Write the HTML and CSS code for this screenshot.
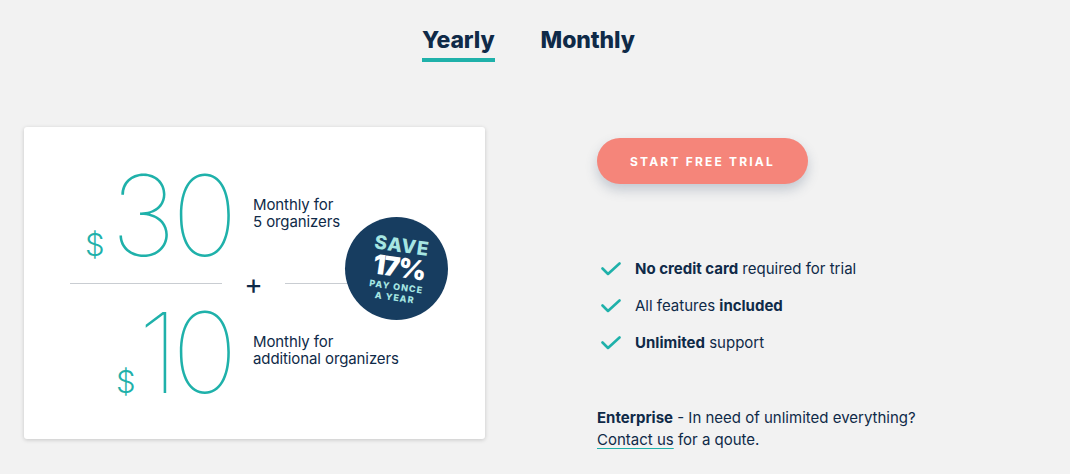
FILE: index.html
```html
<!DOCTYPE html>
<html lang="en">
<head>
<meta charset="utf-8">
<title>Pricing</title>
<link rel="stylesheet" href="styles.css">
</head>
<body>
<div class="page">
  <nav class="tabs">
    <a class="tab active">Yearly</a>
    <a class="tab">Monthly</a>
  </nav>
  <div class="content">
    <div class="card">
      <div class="price-row">
        <div class="price"><span class="cur">$</span><span class="num">30</span></div>
        <div class="desc">Monthly for<br>5 organizers</div>
      </div>
      <div class="divider">
        <span class="line short"></span>
        <span class="plus">+</span>
        <span class="line long"></span>
      </div>
      <div class="price-row">
        <div class="price"><span class="cur cur-ten">$</span><span class="num num-ten">10</span></div>
        <div class="desc">Monthly for<br>additional organizers</div>
      </div>
      <div class="badge">
        <div class="badge-inner">
          <span class="save">SAVE</span>
          <span class="pct">17%</span>
          <span class="once">PAY ONCE<br>A YEAR</span>
        </div>
      </div>
    </div>
    <div class="side">
      <button class="cta">START FREE TRIAL</button>
      <ul class="features">
        <li><svg class="check" viewBox="0 0 20 14" width="20" height="14"><path d="M1.5 6.5 L7 12 L18.5 1.5" fill="none" stroke="#1fb1aa" stroke-width="2.6" stroke-linecap="round" stroke-linejoin="round"/></svg><span><b>No credit card</b> required for trial</span></li>
        <li><svg class="check" viewBox="0 0 20 14" width="20" height="14"><path d="M1.5 6.5 L7 12 L18.5 1.5" fill="none" stroke="#1fb1aa" stroke-width="2.6" stroke-linecap="round" stroke-linejoin="round"/></svg><span>All features <b>included</b></span></li>
        <li><svg class="check" viewBox="0 0 20 14" width="20" height="14"><path d="M1.5 6.5 L7 12 L18.5 1.5" fill="none" stroke="#1fb1aa" stroke-width="2.6" stroke-linecap="round" stroke-linejoin="round"/></svg><span><b>Unlimited</b> support</span></li>
      </ul>
      <p class="enterprise"><b>Enterprise</b> - In need of unlimited everything?<br><a class="contact">Contact us</a> for a qoute.</p>
    </div>
  </div>
</div>
</body>
</html>
```
FILE: styles.css
```css
html, body {
  margin: 0;
  padding: 0;
}
body {
  background: #f2f2f2;
  font-family: Inter, "Noto Sans", sans-serif;
  color: #0f2a48;
  width: 1070px;
  height: 474px;
  overflow: hidden;
}
.page {
  display: flex;
  flex-direction: column;
}
.tabs {
  display: flex;
  justify-content: center;
  gap: 46px;
  padding-top: 25px;
  padding-right: 13px;
}
.tab {
  font-size: 23px;
  font-weight: 800;
  line-height: 30px;
  color: #0f2a48;
  padding-bottom: 3px;
  border-bottom: 4px solid transparent;
  letter-spacing: -0.1px;
}
.tab.active {
  border-bottom-color: #1fb1aa;
}
.content {
  display: flex;
  margin-top: 65px;
  padding-left: 24px;
  gap: 112px;
}
.card {
  position: relative;
  width: 461px;
  height: 312px;
  box-sizing: border-box;
  background: #fff;
  border-radius: 3px;
  box-shadow: 0 1px 4px rgba(0,0,0,0.18);
  padding-top: 43px;
}
.price-row {
  display: flex;
  align-items: center;
  gap: 23px;
}
.price {
  width: 206px;
  display: flex;
  justify-content: flex-end;
  align-items: baseline;
  color: #1fb1aa;
}
.cur {
  font-size: 31px;
  font-weight: 300;
  margin-right: 6px;
}
.cur-ten {
  margin-right: 2px;
}
.num {
  font-size: 112px;
  font-weight: 100;
  line-height: 90px;
  letter-spacing: -4px;
  margin-right: -4px;
}
.num-ten {
  letter-spacing: -7px;
  margin-right: -1px;
}
.desc {
  font-size: 15px;
  line-height: 17px;
  color: #0f2a48;
  letter-spacing: -0.1px;
  margin-bottom: 7px;
}
.divider {
  display: flex;
  align-items: center;
  height: 47px;
  margin-top: -3px;
  padding-left: 46px;
}
.line {
  height: 1px;
  background: #c9cdd2;
}
.line.short { width: 152px; }
.line.long { width: 80px; }
.plus {
  width: 63px;
  text-align: center;
  font-size: 28px;
  font-weight: 400;
  line-height: 20px;
  color: #0f2a48;
}
.badge {
  position: absolute;
  left: 321px;
  top: 90px;
  width: 103px;
  height: 103px;
  border-radius: 50%;
  background: #173d60;
  display: flex;
  align-items: center;
  justify-content: center;
}
.badge-inner {
  display: flex;
  flex-direction: column;
  align-items: center;
  transform: rotate(8deg);
  margin-left: 4px;
  margin-top: 2px;
}
.save {
  font-size: 19px;
  font-weight: 800;
  letter-spacing: 1px;
  color: #a6e6e2;
  line-height: 19px;
}
.pct {
  font-size: 27px;
  font-weight: 900;
  color: #fff;
  line-height: 26px;
  letter-spacing: -1.5px;
}
.once {
  font-size: 9px;
  font-weight: 800;
  letter-spacing: 1px;
  color: #a6e6e2;
  line-height: 11px;
  text-align: center;
  margin-top: 0;
}
.side {
  display: flex;
  flex-direction: column;
  align-items: flex-start;
  padding-top: 11px;
}
.cta {
  width: 211px;
  height: 46px;
  border: none;
  border-radius: 23px;
  background: #f5857a;
  color: #fff;
  font-family: Inter, "Noto Sans", sans-serif;
  font-size: 12px;
  font-weight: 700;
  letter-spacing: 2.2px;
  box-shadow: 0 6px 12px rgba(60, 80, 110, 0.25);
  cursor: pointer;
}
.features {
  list-style: none;
  margin: 74px 0 0;
  padding: 0;
  display: flex;
  flex-direction: column;
  gap: 15px;
}
.features li {
  display: flex;
  align-items: center;
  gap: 14px;
  font-size: 15px;
  line-height: 22px;
  padding-left: 4px;
}
.features b {
  font-weight: 700;
}
.check {
  flex: none;
}
.enterprise {
  margin: 53px 0 0;
  font-size: 15px;
  line-height: 22px;
}
.contact {
  color: #0f2a48;
  text-decoration: underline;
  text-decoration-color: #1fb1aa;
  text-underline-offset: 3px;
}
```
